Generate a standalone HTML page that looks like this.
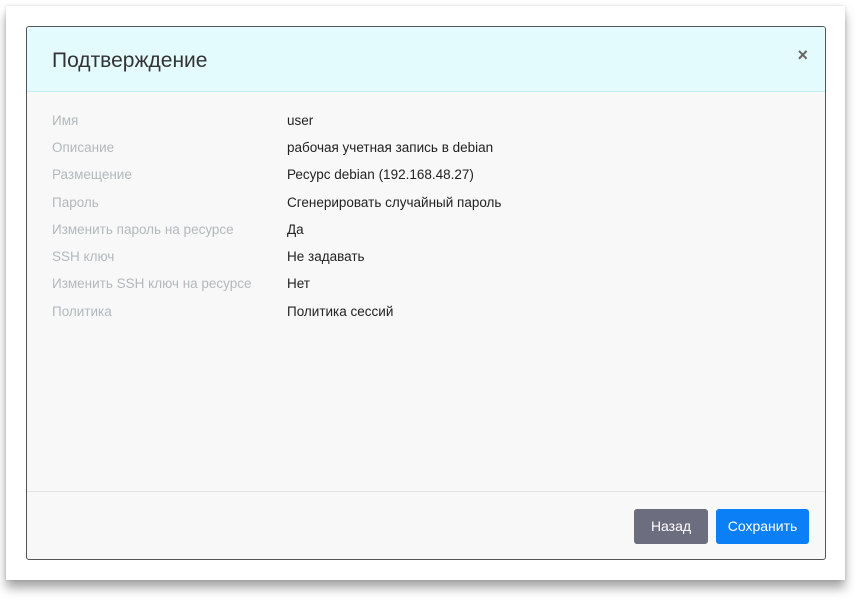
<!DOCTYPE html>
<html><head><meta charset="utf-8"><style>
body{margin:0;width:860px;height:609px;background:#fff;position:relative;overflow:hidden;font-family:"Liberation Sans","DejaVu Sans",sans-serif}
.frame{position:absolute;left:6px;top:6px;width:839px;height:574px;background:#fff;box-shadow:0 8px 10px rgba(0,0,0,.35),0 0 3px rgba(0,0,0,.15)}
.modal{position:absolute;left:26px;top:26px;width:798px;height:532px;border:1px solid #555;border-radius:3px;background:#f8f8f8;overflow:hidden}
.hdr{height:64px;background:#e3fbfc;border-bottom:1px solid #c6eef0;position:relative}
.hdr h1{margin:0;position:absolute;left:25px;top:22px;font-weight:normal;font-size:21px;color:#333}
.x{position:absolute;right:17px;top:18px;font-size:18px;font-weight:bold;color:#666}
.row{position:absolute;left:25px;font-size:13.5px}
.l{color:#b3b9bb}
.v{position:absolute;left:235px;color:#222;white-space:nowrap}
.ft{position:absolute;left:0;right:0;top:464px;border-top:1px solid #e2e2e2}
.b{position:absolute;top:482px;height:35px;border-radius:3px;color:#fff;font-size:14px;line-height:35px;text-align:center}
</style></head><body>
<div class="frame"></div>
<div class="modal">
<div class="hdr"><h1>Подтверждение</h1><span class="x">×</span></div>
<div class="row" style="top:86px"><span class="l">Имя</span><span class="v">user</span></div>
<div class="row" style="top:113px"><span class="l">Описание</span><span class="v">рабочая учетная запись в debian</span></div>
<div class="row" style="top:140px"><span class="l">Размещение</span><span class="v">Ресурс debian (192.168.48.27)</span></div>
<div class="row" style="top:168px"><span class="l">Пароль</span><span class="v">Сгенерировать случайный пароль</span></div>
<div class="row" style="top:195px"><span class="l">Изменить пароль на ресурсе</span><span class="v">Да</span></div>
<div class="row" style="top:222px"><span class="l">SSH ключ</span><span class="v">Не задавать</span></div>
<div class="row" style="top:249px"><span class="l">Изменить SSH ключ на ресурсе</span><span class="v">Нет</span></div>
<div class="row" style="top:277px"><span class="l">Политика</span><span class="v">Политика сессий</span></div>
<div class="ft"></div>
<div class="b" style="left:607px;width:74px;background:#6c6d7e">Назад</div>
<div class="b" style="left:689px;width:93px;background:#0b7ff6">Сохранить</div>
</div>
</body></html>
